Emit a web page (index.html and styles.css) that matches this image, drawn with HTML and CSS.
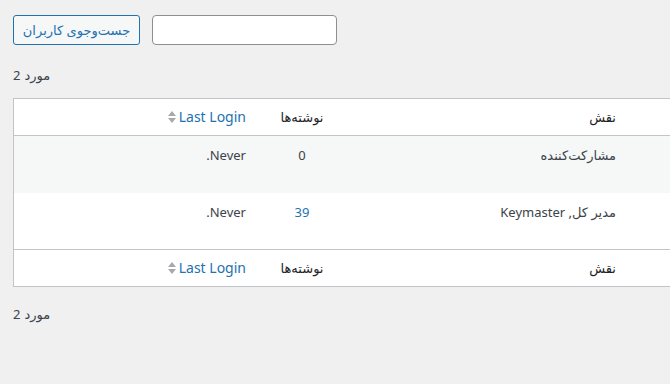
FILE: index.html
```html
<!DOCTYPE html>
<html lang="fa">
<head>
    <meta charset="UTF-8">
    <title>کاربران</title>
    <link rel="stylesheet" href="styles.css">
</head>
<body>
    <div class="wrap" dir="rtl">
        <div class="search-box">
            <input type="search" class="search-input">
            <button type="button" class="button">جست‌وجوی کاربران</button>
        </div>
        <div class="tablenav" dir="ltr"><span>2</span><span>مورد</span></div>
        <table class="users">
            <thead>
                <tr>
                    <th class="col-email"></th>
                    <th class="col-role">نقش</th>
                    <th class="col-posts">نوشته‌ها</th>
                    <th class="col-login"><a href="#"><span>Last Login</span><span class="sort"><svg width="8" height="14" viewBox="0 0 8 14"><path d="M4 1 L8 6 H0 Z M0 8 H8 L4 13 Z" fill="#a7aaad"/></svg></span></a></th>
                </tr>
            </thead>
            <tbody>
                <tr class="alt">
                    <td></td>
                    <td>مشارکت‌کننده</td>
                    <td class="num">0</td>
                    <td>Never.</td>
                </tr>
                <tr>
                    <td></td>
                    <td>مدیر کل, Keymaster</td>
                    <td class="num"><a href="#">39</a></td>
                    <td>Never.</td>
                </tr>
            </tbody>
            <tfoot>
                <tr>
                    <th></th>
                    <th>نقش</th>
                    <th class="col-posts">نوشته‌ها</th>
                    <th class="col-login"><a href="#"><span>Last Login</span><span class="sort"><svg width="8" height="14" viewBox="0 0 8 14"><path d="M4 1 L8 6 H0 Z M0 8 H8 L4 13 Z" fill="#a7aaad"/></svg></span></a></th>
                </tr>
            </tfoot>
        </table>
        <div class="tablenav bottom" dir="ltr"><span>2</span><span>مورد</span></div>
    </div>
</body>
</html>
```

FILE: styles.css
```css
html, body {
    margin: 0;
    background: #f0f0f1;
    overflow: hidden;
}

body {
    font-family: "Noto Sans", "DejaVu Sans", sans-serif;
    font-size: 13px;
    color: #3c434a;
}

.wrap {
    width: 800px;
    margin-left: 13px;
    direction: rtl;
}

.search-box {
    display: flex;
    justify-content: flex-end;
    gap: 12px;
    padding-top: 15px;
}

.search-input {
    width: 185px;
    height: 30px;
    box-sizing: border-box;
    border: 1px solid #8c8f94;
    border-radius: 4px;
    background: #fff;
    padding: 0 8px;
}

.button {
    width: 127px;
    height: 30px;
    border: 1px solid #2271b1;
    border-radius: 3px;
    background: #f6f7f7;
    color: #2271b1;
    font-family: inherit;
    font-size: 13px;
    padding: 0 6px;
    white-space: nowrap;
}

.tablenav {
    display: flex;
    direction: ltr;
    gap: 4px;
    height: 24px;
    line-height: 24px;
    margin: 18px 0 11px;
    color: #3c434a;
}

.tablenav.bottom {
    margin: 15px 0 0;
}

.users {
    width: 800px;
    table-layout: fixed;
    border-collapse: collapse;
    border: 1px solid #c3c4c7;
    background: #fff;
}

.users th,
.users td {
    text-align: right;
    padding: 0 10px;
    font-weight: normal;
    line-height: 18px;
}

.users thead th,
.users tfoot th {
    height: 36px;
    color: #1d2327;
}

.users thead tr {
    border-bottom: 1px solid #c3c4c7;
}

.users tfoot tr {
    border-top: 1px solid #c3c4c7;
}

.users td {
    height: 57px;
    vertical-align: top;
    padding-top: 10px;
    box-sizing: border-box;
}

.users tr.alt td {
    background: #f6f7f7;
}

.col-email { width: 166px; }
.col-role { width: 258px; }
.col-posts { width: 72px; }
.col-login { width: auto; }

.users .col-posts,
.users td.num {
    text-align: center;
}

.users a {
    color: #2271b1;
    text-decoration: none;
}

.col-login a {
    display: inline-flex;
    align-items: center;
    gap: 3px;
    font-size: 14px;
}

.sort {
    display: inline-flex;
}
```
